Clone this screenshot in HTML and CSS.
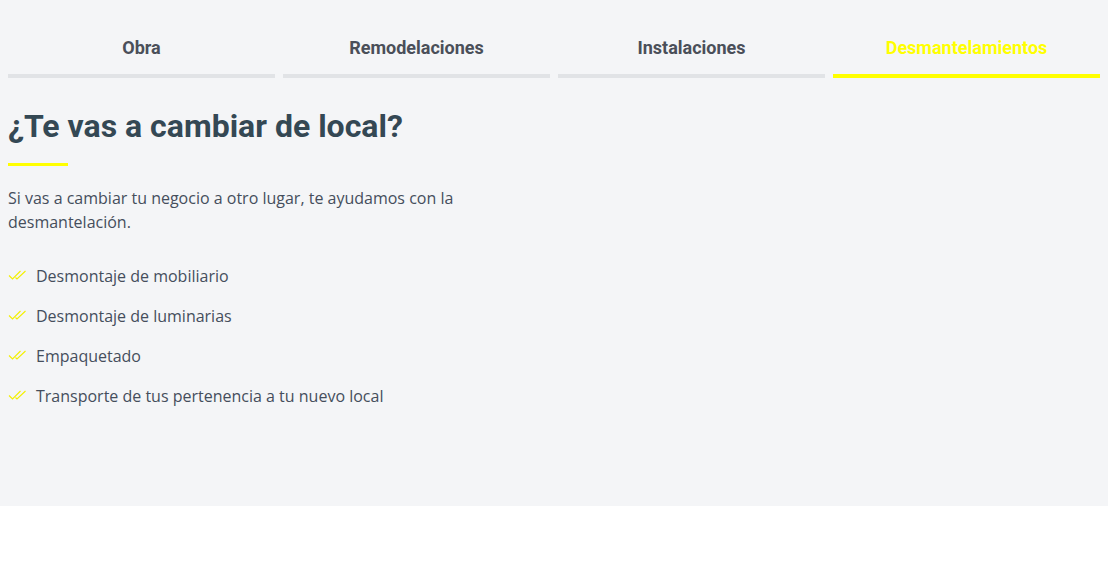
FILE: index.html
```html
<!DOCTYPE html>
<html lang="es">
<head>
<meta charset="utf-8">
<title>Desmantelamientos</title>
<link rel="stylesheet" href="styles.css">
</head>
<body>
<section class="services">
  <nav class="tabs">
    <a class="tab">Obra</a>
    <a class="tab">Remodelaciones</a>
    <a class="tab">Instalaciones</a>
    <a class="tab active">Desmantelamientos</a>
  </nav>
  <div class="panel">
    <h2 class="title">¿Te vas a cambiar de local?</h2>
    <div class="rule"></div>
    <p class="lead">Si vas a cambiar tu negocio a otro lugar, te ayudamos con la desmantelación.</p>
    <ul class="checks">
      <li><svg class="ico" viewBox="0 0 20 12" width="20" height="12"><path d="M1 5.5 L4.5 9 L12.5 1 M7.5 7.5 L9 9 L17.5 1" fill="none" stroke="#f3f000" stroke-width="1.1"/></svg><span>Desmontaje de mobiliario</span></li>
      <li><svg class="ico" viewBox="0 0 20 12" width="20" height="12"><path d="M1 5.5 L4.5 9 L12.5 1 M7.5 7.5 L9 9 L17.5 1" fill="none" stroke="#f3f000" stroke-width="1.1"/></svg><span>Desmontaje de luminarias</span></li>
      <li><svg class="ico" viewBox="0 0 20 12" width="20" height="12"><path d="M1 5.5 L4.5 9 L12.5 1 M7.5 7.5 L9 9 L17.5 1" fill="none" stroke="#f3f000" stroke-width="1.1"/></svg><span>Empaquetado</span></li>
      <li><svg class="ico" viewBox="0 0 20 12" width="20" height="12"><path d="M1 5.5 L4.5 9 L12.5 1 M7.5 7.5 L9 9 L17.5 1" fill="none" stroke="#f3f000" stroke-width="1.1"/></svg><span>Transporte de tus pertenencia a tu nuevo local</span></li>
    </ul>
  </div>
</section>
</body>
</html>
```
FILE: styles.css
```css
html, body {
  margin: 0;
  padding: 0;
  background: #ffffff;
}

.services {
  background: #f4f5f7;
  height: 506px;
  box-sizing: border-box;
  padding: 20px 8px 0;
}

.tabs {
  display: grid;
  grid-template-columns: repeat(4, 1fr);
  column-gap: 8px;
}

.tab {
  font-family: Roboto, "Liberation Sans", sans-serif;
  font-weight: 700;
  font-size: 18px;
  line-height: 22px;
  color: #4a4f59;
  text-align: center;
  padding: 17px 0 15px;
  border-bottom: 4px solid #e1e3e6;
  cursor: pointer;
}

.tab.active {
  color: #ffff00;
  border-bottom-color: #ffff00;
}

.panel {
  width: 546px;
}

.title {
  font-family: Roboto, "Liberation Sans", sans-serif;
  font-weight: 700;
  font-size: 32px;
  line-height: 40px;
  color: #344854;
  margin: 28px 0 0;
}

.rule {
  width: 60px;
  height: 3px;
  background: #ffff00;
  margin-top: 17px;
}

.lead {
  font-family: "Open Sans", "Liberation Sans", sans-serif;
  font-size: 16px;
  line-height: 24px;
  color: #454e5c;
  margin: 20px 0 0;
}

.checks {
  list-style: none;
  margin: 30px 0 0;
  padding: 0;
  display: flex;
  flex-direction: column;
  gap: 16px;
}

.checks li {
  display: flex;
  align-items: center;
  gap: 8px;
  font-family: "Open Sans", "Liberation Sans", sans-serif;
  font-size: 16px;
  line-height: 24px;
  color: #454e5c;
}

.ico {
  flex: none;
}
```
